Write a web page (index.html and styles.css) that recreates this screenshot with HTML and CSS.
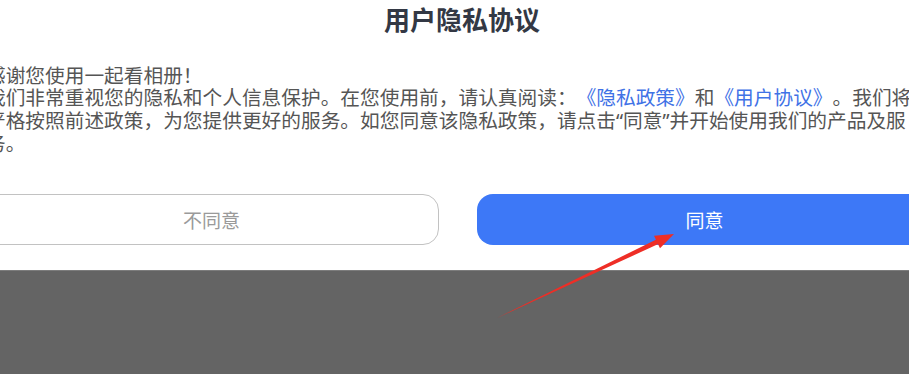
FILE: index.html
```html
<!DOCTYPE html>
<html lang="zh-CN">
<head>
<meta charset="utf-8">
<title>用户隐私协议</title>
<link rel="stylesheet" href="styles.css">
</head>
<body>
<div class="screen">
  <div class="dialog">
    <h1 class="title">用户隐私协议</h1>
    <div class="content">
      <p class="line cjk">感谢您使用一起看相册！</p>
      <p class="line">我们非常重视您的隐私和个人信息保护。在您使用前，请认真阅读：<a class="link">《隐私政策》</a>和<a class="link">《用户协议》</a>。我们将</p>
      <p class="line">严格按照前述政策，为您提供更好的服务。如您同意该隐私政策，请点击“同意”并开始使用我们的产品及服</p>
      <p class="line">务。</p>
    </div>
    <div class="actions">
      <button class="btn btn-outline">不同意</button>
      <button class="btn btn-primary">同意</button>
    </div>
  </div>
  <div class="backdrop"></div>
  <svg class="arrow" width="909" height="374" viewBox="0 0 909 374">
    <polygon points="497,318 662.1,242.3 659.9,237.7" fill="#ee2e26"/>
    <polygon points="674,234 654,235.7 660,248.3" fill="#ee2e26"/>
  </svg>
</div>
</body>
</html>
```

FILE: styles.css
```css
html, body {
  margin: 0;
  padding: 0;
  background: #646464;
}

.screen {
  position: relative;
  width: 909px;
  height: 374px;
  overflow: hidden;
  font-family: "Noto Sans CJK SC", "Noto Sans", sans-serif;
}

.dialog {
  margin: 0 -39px 0 -32px;
  padding: 0 16px 25px;
  background: #ffffff;
}

.title {
  margin: 0;
  height: 38px;
  line-height: 38px;
  font-size: 26px;
  font-weight: 700;
  color: #333844;
  text-align: center;
  padding-left: 8px;
}

.content {
  margin: 24.5px 0 0 2px;
  color: #555555;
  font-family: "Noto Sans", "Noto Sans CJK SC", sans-serif;
  font-size: 19.7px;
  line-height: 23px;
  text-spacing-trim: space-all;
}

.line {
  margin: 0;
  height: 23px;
  white-space: nowrap;
}

.cjk {
  font-family: "Noto Sans CJK SC", sans-serif;
}

.link {
  color: #3f72e6;
  text-decoration: none;
}

.actions {
  display: grid;
  grid-template-columns: 1fr 1fr;
  gap: 38px;
  margin-top: 39.5px;
}

.btn {
  height: 51px;
  border-radius: 16px;
  font-family: "Noto Sans CJK SC", "Noto Sans", sans-serif;
  font-size: 19px;
  padding: 0;
}

.btn-outline {
  background: #ffffff;
  border: 1.5px solid #c2c2c2;
  color: #9a9a9a;
}

.btn-primary {
  background: #3d78f7;
  border: none;
  color: #ffffff;
}

.backdrop {
  height: 103px;
  background: #646464;
  border-top: 1px solid #7c7c7c;
}

.arrow {
  position: absolute;
  left: 0;
  top: 0;
  pointer-events: none;
}
```
